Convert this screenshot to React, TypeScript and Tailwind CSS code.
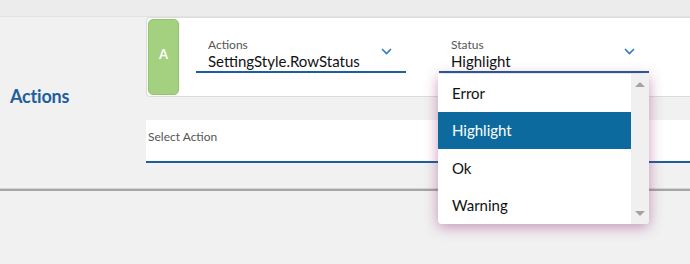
import React from "react";

function Chevron({ className }: { className?: string }) {
  return (
    <svg width="11" height="7" viewBox="0 0 11 7" className={className}>
      <path d="M1 1 L5.5 5.5 L10 1" fill="none" stroke="#2f78c4" strokeWidth="1.6" />
    </svg>
  );
}

export default function App() {
  const items = ["Error", "Highlight", "Ok", "Warning"];
  return (
    <div
      className="w-[690px] h-[264px] bg-[#f1f1f1] overflow-hidden relative"
      style={{ fontFamily: "Lato, 'Noto Sans', sans-serif" }}
    >
      <div className="h-[17px] bg-[#ececec] border-b border-[#e2e2e2]" />
      <div className="flex">
        <div className="w-[146px] shrink-0 pl-[10px] pt-[66px]">
          <span className="text-[18px] font-bold text-[#1d5f9c] tracking-[-0.2px]">Actions</span>
        </div>
        <div className="flex-1 flex flex-col">
          <div className="h-[80px] bg-white border border-[#dcdcdc] border-r-0 rounded-l-[4px] flex items-stretch p-[1px]">
            <div className="w-[31px] bg-[#a4d17f] border border-[#93c46c] rounded-[5px] flex justify-center pt-[28px]">
              <span className="text-white text-[13px] font-bold leading-none">A</span>
            </div>
            <div className="flex pl-[17px] pt-[19px] gap-[33px]">
              <div className="w-[210px] h-[35px] border-b-[2px] border-[#1d5f9c] pl-[12px] relative">
                <div className="text-[12px] leading-[14px] text-[#555]">Actions</div>
                <div className="text-[15px] leading-[18px] text-[#111]">SettingStyle.RowStatus</div>
                <Chevron className="absolute right-[14px] top-[10px]" />
              </div>
              <div className="w-[210px] h-[35px] border-b-[2px] border-[#1d5f9c] pl-[12px] relative">
                <div className="text-[12px] leading-[14px] text-[#555]">Status</div>
                <div className="text-[15px] leading-[18px] text-[#111]">Highlight</div>
                <Chevron className="absolute right-[14px] top-[10px]" />
              </div>
            </div>
          </div>
          <div className="mt-[23px] h-[43px] bg-white border-b-[2px] border-[#1d5f9c] pl-[2px] pt-[3px]">
            <span className="text-[12px] text-[#555]">Select Action</span>
          </div>
        </div>
      </div>
      <div className="mt-[25px] h-[3px] border-t border-[#d4d4d4] bg-[#a6a6a6]" />

      <div className="absolute left-[438px] top-[74px] w-[211px] h-[150px] bg-white rounded-b-[4px] shadow-[0_3px_14px_rgba(140,30,110,0.45)] flex overflow-hidden">
        <div className="flex-1 flex flex-col">
          {items.map((it) => (
            <div
              key={it}
              className={
                "h-[37.5px] flex items-center pl-[14px] text-[15px] " +
                (it === "Highlight" ? "bg-[#0d6a9f] text-white" : "text-[#111]")
              }
            >
              {it}
            </div>
          ))}
        </div>
        <div className="w-[18px] bg-[#f0f0f0] flex flex-col items-center justify-between py-[8px]">
          <div className="w-0 h-0 border-l-[5px] border-r-[5px] border-b-[5px] border-l-transparent border-r-transparent border-b-[#a3a3a3]" />
          <div className="w-0 h-0 border-l-[5px] border-r-[5px] border-t-[5px] border-l-transparent border-r-transparent border-t-[#a3a3a3]" />
        </div>
      </div>
    </div>
  );
}
